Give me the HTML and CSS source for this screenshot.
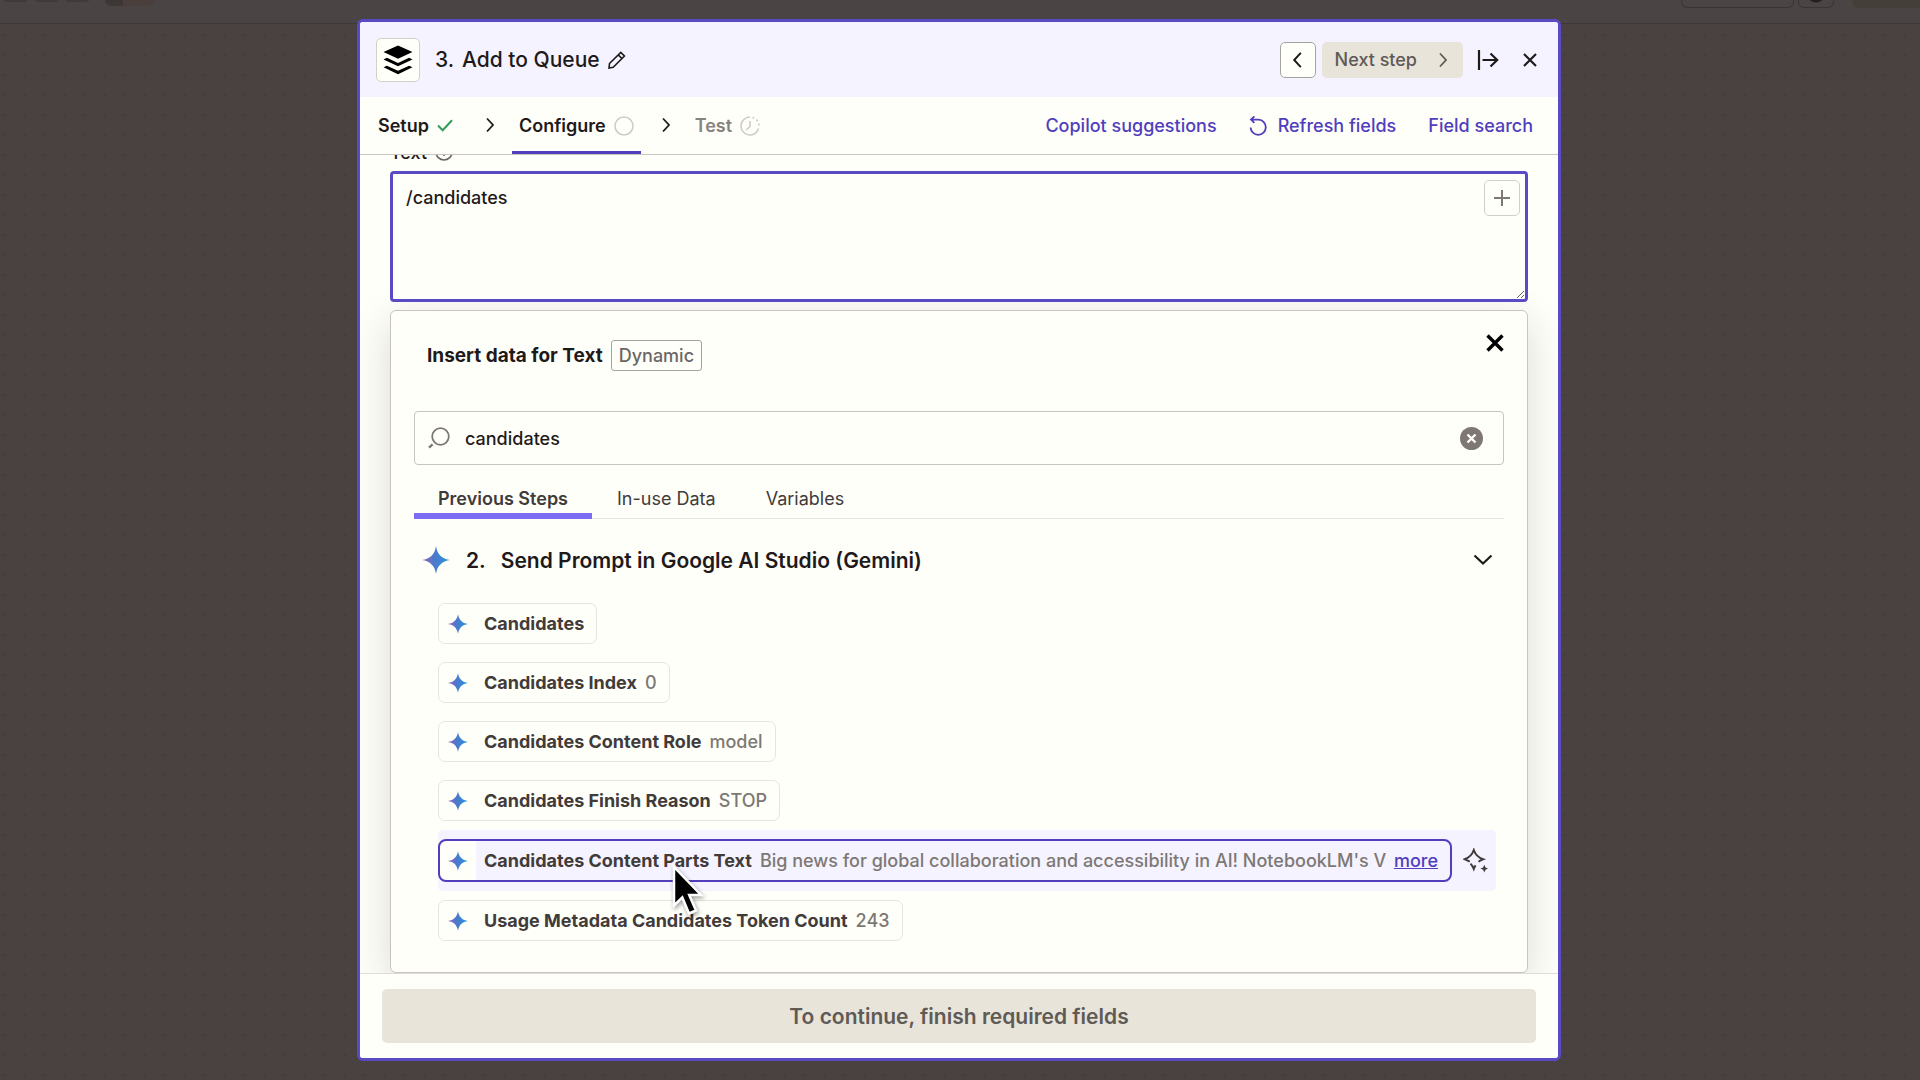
FILE: index.html
```html
<!DOCTYPE html>
<html lang="en">
<head>
  <meta charset="UTF-8">
  <title>Add to Queue</title>
  <link rel="stylesheet" href="styles.css">
</head>
<body>

<!-- shared icons -->
<svg class="sprite" aria-hidden="true">
  <defs>
    <linearGradient id="gemini" x1="0" y1="0" x2="1" y2="0">
      <stop offset="0" stop-color="#9a62b8"/>
      <stop offset="0.4" stop-color="#4f78cc"/>
      <stop offset="1" stop-color="#2196dc"/>
    </linearGradient>
  </defs>
  <symbol id="star" viewBox="0 0 28 28">
    <path fill="url(#gemini)" d="M14 0c1 8 6 13 14 14-8 1-13 6-14 14-1-8-6-13-14-14 8-1 13-6 14-14z"/>
  </symbol>
  <symbol id="chevron" viewBox="0 0 10 16">
    <path d="M2 1.5l6 6.5-6 6.5" fill="none" stroke="currentColor" stroke-width="1.8"/>
  </symbol>
</svg>

<div class="editor">
  <div class="topbar">
    <div class="topbar-left">
      <span class="ghost"></span>
      <span class="ghost"></span>
      <span class="ghost"></span>
      <span class="ghost-toggle"></span>
    </div>
    <div class="topbar-right">
      <span class="ghost-box"></span>
      <span class="ghost-avatar"></span>
      <span class="ghost-publish"></span>
    </div>
  </div>
  <div class="canvas"></div>
</div>

<div class="overlay">
  <section class="dialog" role="dialog" aria-labelledby="step-title">

    <header class="dialog-header">
      <span class="app-icon">
        <svg width="30" height="30" viewBox="0 0 30 30">
          <path d="M15 0.5l14.5 6.6L15 13.8 0.5 7.1z"/>
          <path d="M0.5 14.4l3.4-1.6L15 17.9l11.1-5.1 3.4 1.6L15 21.2z"/>
          <path d="M0.5 22.3l3.4-1.6L15 25.8l11.1-5.1 3.4 1.6L15 29.2z"/>
        </svg>
      </span>
      <h1 id="step-title"><span>3.</span> <span>Add to Queue</span></h1>
      <button class="icon-btn" aria-label="Rename step">
        <svg width="18" height="18" viewBox="0 0 18 18" fill="none" stroke="currentColor" stroke-width="1.6">
          <path d="M1.5 12.5L12.8 1.4l3.6 3.6L5.2 16.2l-4.2.8zM10.3 3.9l3.6 3.6"/>
        </svg>
      </button>
      <div class="header-actions">
        <button class="prev-btn" aria-label="Previous step">
          <svg class="flip" width="11" height="18"><use href="#chevron"/></svg>
        </button>
        <button class="next-btn" disabled>Next step
          <svg width="10" height="16"><use href="#chevron"/></svg>
        </button>
        <button class="icon-btn expand-btn" aria-label="Expand">
          <svg width="22" height="22" viewBox="0 0 22 22" fill="none" stroke="currentColor" stroke-width="2.2">
            <path d="M2 1v20M5.5 11H20M13.5 4.5L20.2 11l-6.7 6.5"/>
          </svg>
        </button>
        <button class="icon-btn" aria-label="Close">
          <svg width="14" height="14" viewBox="0 0 14 14" fill="none" stroke="currentColor" stroke-width="2.2">
            <path d="M1 1l12 12M13 1L1 13"/>
          </svg>
        </button>
      </div>
    </header>

    <nav class="steps">
      <a class="step done" href="#">Setup
        <svg class="ok" width="16" height="13" viewBox="0 0 16 13" fill="none" stroke="currentColor" stroke-width="2">
          <path d="M1 6.5l4.7 4.8L15 1.3"/>
        </svg>
      </a>
      <svg class="sep" width="10" height="16"><use href="#chevron"/></svg>
      <a class="step active" href="#">Configure
        <svg class="muted" width="20" height="20" viewBox="0 0 20 20" fill="none" stroke="currentColor" stroke-width="1.6">
          <circle cx="10" cy="10" r="9"/>
        </svg>
      </a>
      <svg class="sep" width="10" height="16"><use href="#chevron"/></svg>
      <a class="step disabled" href="#">Test
        <svg class="muted" width="20" height="20" viewBox="0 0 20 20" fill="none" stroke="currentColor" stroke-width="1.6">
          <path d="M10 1a9 9 0 1 0 8.6 11.6M10 5v5.5L6 14"/>
          <path d="M12.5 1.4a9 9 0 0 1 6.5 8.6" stroke-dasharray="2 2.4"/>
        </svg>
      </a>
      <div class="step-links">
        <button class="link-btn">Copilot suggestions</button>
        <button class="link-btn">
          <svg width="19" height="20" viewBox="0 0 19 20" fill="none" stroke="currentColor" stroke-width="1.8">
            <path d="M2 3.6h7.6A7.6 7.6 0 1 1 1.6 11.5M5.4 0.4L2 3.6l3.4 3.2"/>
          </svg>
          Refresh fields
        </button>
        <button class="link-btn">Field search</button>
      </div>
    </nav>

    <div class="dialog-body">
      <div class="field-label">
        <label for="text-field">Text</label>
        <svg width="18" height="18" viewBox="0 0 18 18" fill="none" stroke="currentColor" stroke-width="1.6">
          <circle cx="9" cy="9" r="8"/>
          <path d="M9 4v6M9 11.5V13"/>
        </svg>
      </div>
      <div class="text-wrap">
        <textarea id="text-field" spellcheck="false">/candidates</textarea>
        <button class="plus-btn" aria-label="Insert data">
          <svg width="16" height="16" viewBox="0 0 16 16" fill="none" stroke="currentColor" stroke-width="2">
            <path d="M8 0v16M0 8h16"/>
          </svg>
        </button>
      </div>

      <div class="picker">
        <div class="picker-head">
          <h2>Insert data for Text</h2>
          <span class="badge">Dynamic</span>
          <button class="icon-btn picker-close" aria-label="Close">
            <svg width="18" height="18" viewBox="0 0 18 18" fill="none" stroke="currentColor" stroke-width="3.4">
              <path d="M1.5 1.5l15 15M16.5 1.5l-15 15"/>
            </svg>
          </button>
        </div>

        <div class="search">
          <svg width="22" height="22" viewBox="0 0 22 22" fill="none" stroke="currentColor" stroke-width="1.8">
            <circle cx="12.5" cy="9.5" r="8.3"/>
            <path d="M4.6 17.4L1 20.6" stroke-width="2.4"/>
          </svg>
          <input type="text" value="candidates" aria-label="Search data" spellcheck="false">
          <button class="icon-btn clear-btn" aria-label="Clear search">
            <svg width="23" height="23" viewBox="0 0 23 23">
              <circle cx="11.5" cy="11.5" r="11.5" fill="currentColor"/>
              <path d="M7.5 7.5l8 8M15.5 7.5l-8 8" stroke="#fffffa" stroke-width="2.4"/>
            </svg>
          </button>
        </div>

        <div class="tabs" role="tablist">
          <button class="tab active" role="tab" aria-selected="true">Previous Steps</button>
          <button class="tab" role="tab">In-use Data</button>
          <button class="tab" role="tab">Variables</button>
        </div>

        <button class="group-head">
          <svg width="28" height="28"><use href="#star"/></svg>
          <span class="group-number">2.</span>
          <span class="group-name">Send Prompt in Google AI Studio (Gemini)</span>
          <svg class="caret" width="20" height="12" viewBox="0 0 20 12" fill="none" stroke="currentColor" stroke-width="2.2">
            <path d="M1.5 1.5l8.5 8 8.5-8"/>
          </svg>
        </button>

        <ul class="values">
          <li><button class="chip"><svg width="20" height="20"><use href="#star"/></svg><b>Candidates</b></button></li>
          <li><button class="chip"><svg width="20" height="20"><use href="#star"/></svg><b>Candidates Index</b> <span>0</span></button></li>
          <li><button class="chip"><svg width="20" height="20"><use href="#star"/></svg><b>Candidates Content Role</b> <span>model</span></button></li>
          <li><button class="chip"><svg width="20" height="20"><use href="#star"/></svg><b>Candidates Finish Reason</b> <span>STOP</span></button></li>
          <li class="selected">
            <button class="chip"><svg width="20" height="20"><use href="#star"/></svg><b>Candidates Content Parts Text</b> <span class="preview">Big news for global collaboration and accessibility in AI! NotebookLM's V</span> <u>more</u></button>
            <button class="icon-btn ai-btn" aria-label="Transform with AI">
              <svg width="25" height="25" viewBox="0 0 25 25" fill="none" stroke="currentColor" stroke-width="2">
                <path d="M6.8 13.6L1.6 11.2C6 9.8 9.2 6.6 10.8 2c1.6 4.6 4.8 7.8 9.2 9.2-1.7.6-3.2 1.5-4.5 2.6M7.5 15.6c1.4 1.4 2.5 3 3.3 5.2.5-1.3 1.1-2.4 1.8-3.4"/>
                <path d="M21.3 16.8l1.2 2.7 2.5 1.1-2.5 1.2-1.2 2.7-1.2-2.7-2.6-1.2 2.6-1.1z" fill="currentColor" stroke="none"/>
              </svg>
            </button>
          </li>
          <li><button class="chip"><svg width="20" height="20"><use href="#star"/></svg><b>Usage Metadata Candidates Token Count</b> <span>243</span></button></li>
        </ul>
      </div>
    </div>

    <footer class="dialog-footer">
      <button class="continue-btn" disabled>To continue, finish required fields</button>
    </footer>
  </section>
</div>

<!-- mouse pointer -->
<svg class="pointer" width="36" height="54" viewBox="0 0 36 54">
  <path d="M3 3v38.5l8.3-8L18 49.5l7-3-6.8-15.5H30z" fill="#000" stroke="#fff" stroke-width="2.5"/>
</svg>

</body>
</html>
```

FILE: styles.css
```css
* {
  box-sizing: border-box;
}

body {
  margin: 0;
  font-family: Inter, "Liberation Sans", sans-serif;
  font-size: 18px;
  color: #1f1a1a;
}

h1, h2, ul {
  margin: 0;
  padding: 0;
}

button {
  font: inherit;
  color: inherit;
  background: none;
  border: none;
  padding: 0;
  cursor: pointer;
}

svg {
  display: block;
  flex: none;
}

.sprite {
  position: absolute;
  width: 0;
  height: 0;
}

/* dimmed editor behind the dialog */
.editor {
  display: flex;
  flex-direction: column;
  height: 100vh;
}

.topbar {
  display: flex;
  justify-content: space-between;
  align-items: flex-start;
  height: 24px;
  background: #4a4544;
  border-bottom: 1px solid #3e3938;
}

.topbar-left,
.topbar-right {
  display: flex;
  gap: 8px;
}

.topbar-left {
  padding-left: 4px;
}

.topbar-right {
  gap: 4px;
}

.ghost {
  width: 23px;
  height: 2px;
  background: #403b3a;
  border-radius: 0 0 4px 4px;
}

.ghost-toggle {
  width: 50px;
  height: 6px;
  margin-left: 8px;
  background: linear-gradient(90deg, #3d3836 18px, #4b3f3d 18px);
  border-radius: 0 0 10px 10px;
}

.ghost-box,
.ghost-avatar {
  width: 113px;
  height: 8px;
  border: 1px solid #3a3535;
  border-top: none;
  border-radius: 0 0 6px 6px;
}

.ghost-avatar {
  width: 36px;
  background: radial-gradient(circle at 50% -6px, #231f1e 8px, transparent 9px);
}

.ghost-publish {
  width: 68px;
  height: 8px;
  margin-left: 14px;
  background: #453f3a;
  border-radius: 0 0 0 6px;
}

.canvas {
  flex: 1;
  background-color: #4a4240;
  background-image: radial-gradient(circle, #433e3d 1px, transparent 2px);
  background-size: 20px 20px;
  background-position: -5px 1px;
}

/* dialog */
.overlay {
  position: fixed;
  inset: 0;
  display: flex;
  justify-content: center;
  padding: 19px 17px 19px 15px;
}

.dialog {
  display: flex;
  flex-direction: column;
  width: 100%;
  max-width: 1204px;
  background: #fffffa;
  border: 3px solid #5a4bc4;
  border-radius: 6px;
  overflow: hidden;
}

.dialog-header {
  display: flex;
  align-items: center;
  height: 75px;
  padding: 0 21px 0 16px;
  background: #f5f3ff;
  flex: none;
}

.app-icon {
  display: grid;
  place-items: center;
  width: 44px;
  height: 44px;
  background: #fffffa;
  border: 1px solid #d4d0c8;
  border-radius: 5px;
}

.dialog-header h1 {
  display: flex;
  gap: 8px;
  margin: 0 8px 0 15px;
  font-size: 21px;
  font-weight: 500;
}

.header-actions {
  display: flex;
  align-items: center;
  gap: 6px;
  margin-left: auto;
}

.prev-btn,
.next-btn {
  display: flex;
  align-items: center;
  justify-content: center;
  height: 36px;
  border-radius: 5px;
}

.prev-btn {
  width: 36px;
  background: #fffffa;
  border: 1px solid #a8a39c;
}

.flip {
  transform: rotate(180deg);
}

.next-btn {
  gap: 21px;
  padding: 0 15px 0 13px;
  background: #e8e4da;
  color: #5f5a56;
  font-weight: 500;
}

.expand-btn {
  margin: 0 18px 0 8px;
}

.steps {
  display: flex;
  align-items: center;
  height: 58px;
  padding: 0 25px 0 18px;
  border-bottom: 1px solid #c9c5bd;
  flex: none;
}

.step {
  display: flex;
  align-items: center;
  gap: 8px;
  height: 57px;
  color: #1f1a1a;
  font-weight: 600;
  text-decoration: none;
}

.step.done {
  margin-right: 12px;
}

.step.active {
  padding: 3px 7px 0;
  border-bottom: 3px solid #503ebd;
}

.step.disabled {
  margin-left: 7px;
  color: #88827e;
}

.sep {
  margin: 0 17px 2px 20px;
}

.ok {
  color: #2f9e58;
}

.muted {
  color: #cfcbc6;
}

.step-links {
  display: flex;
  gap: 32px;
  margin-left: auto;
}

.link-btn {
  display: flex;
  align-items: center;
  gap: 10px;
  color: #503ebd;
  font-weight: 500;
}

.dialog-body {
  display: flex;
  flex-direction: column;
  flex: 1;
  min-height: 0;
  padding: 0 30px;
  overflow: hidden;
}

/* scrolled partly under the step bar */
.field-label {
  display: flex;
  align-items: center;
  gap: 8px;
  height: 22px;
  margin-top: -14px;
  margin-bottom: 8px;
  font-weight: 500;
  flex: none;
}

.field-label svg {
  color: #6b6663;
}

.text-wrap {
  position: relative;
  flex: none;
}

.text-wrap textarea {
  display: block;
  width: 100%;
  height: 131px;
  padding: 12px 60px 12px 13px;
  font: inherit;
  font-weight: 500;
  line-height: 24px;
  color: inherit;
  background: #fffffa;
  border: 3px solid #5a4bc4;
  border-radius: 4px;
  outline: none;
}

.plus-btn {
  position: absolute;
  top: 9px;
  right: 8px;
  display: grid;
  place-items: center;
  width: 36px;
  height: 36px;
  color: #7d7874;
  background: #fffffa;
  border: 1px solid #d4d0c8;
  border-radius: 5px;
}

/* data picker */
.picker {
  flex: 1;
  min-height: 0;
  margin-top: 8px;
  padding: 0 23px;
  background: #fffffa;
  border: 1px solid #c9c5bd;
  border-radius: 6px;
  box-shadow: 0 12px 40px rgba(31, 26, 26, 0.16);
}

.picker-head {
  display: flex;
  align-items: flex-start;
  gap: 8px;
  height: 100px;
  padding: 29px 0 0 13px;
}

.picker-head h2 {
  font-size: 19px;
  font-weight: 700;
  line-height: 31px;
}

.badge {
  height: 31px;
  padding: 0 7px;
  color: #6b6663;
  font-weight: 500;
  line-height: 29px;
  border: 1px solid #a8a39c;
  border-radius: 3px;
}

.picker-close {
  margin: -6px 0 0 auto;
  color: #000;
}

.search {
  display: flex;
  align-items: center;
  height: 54px;
  padding: 0 20px 0 13px;
  color: #7d7874;
  border: 1px solid #c9c5bd;
  border-radius: 4px;
}

.search input {
  flex: 1;
  min-width: 0;
  margin-left: 15px;
  padding: 0;
  font: inherit;
  font-weight: 500;
  color: #1f1a1a;
  background: none;
  border: none;
  outline: none;
}

.tabs {
  display: flex;
  height: 54px;
  border-bottom: 1px solid #e8e4de;
}

.tab {
  height: 54px;
  padding: 18px 25px 0;
  color: #413b3a;
  border-bottom: 6px solid transparent;
}

.tab.active {
  padding: 18px 24px 0;
  font-weight: 600;
  border-color: #7b6cf2;
}

.group-head {
  display: flex;
  align-items: center;
  width: 100%;
  height: 68px;
  margin-top: 7px;
  padding: 0 11px 0 8px;
  font-size: 21px;
  font-weight: 600;
}

.group-number {
  margin: 0 15px 0 16px;
}

.caret {
  margin-left: auto;
}

.values {
  padding: 0 8px 0 24px;
  list-style: none;
}

.values li {
  display: flex;
  align-items: center;
  height: 59px;
}

.chip {
  display: flex;
  align-items: center;
  gap: 8px;
  height: 41px;
  min-width: 0;
  padding: 0 12px 0 9px;
  color: #413b3a;
  white-space: nowrap;
  border: 1px solid #e8e4de;
  border-radius: 7px;
}

.chip svg {
  margin-right: 8px;
}

.chip b {
  font-weight: 700;
}

.chip span {
  color: #7d7874;
  font-weight: 500;
}

.values .selected {
  height: 61px;
  background: #f5f3ff;
  border-radius: 5px;
}

.selected .chip {
  flex: 1;
  height: 43px;
  padding-left: 8px;
  background: linear-gradient(90deg, #fffffa 36px, #f5f3ff 36px);
  border: 2px solid #503ebd;
  border-radius: 8px;
}

.chip .preview {
  overflow: hidden;
}

.chip u {
  margin-left: auto;
  color: #503ebd;
  font-weight: 500;
}

.ai-btn {
  margin: 0 8px 0 11px;
  color: #413b3a;
}

.dialog-footer {
  position: relative;
  padding: 15px 22px;
  background: #fffffa;
  border-top: 1px solid #e0dcd6;
  flex: none;
}

.continue-btn {
  width: 100%;
  height: 54px;
  color: #5f5a56;
  font-size: 21px;
  font-weight: 600;
  background: #e8e4da;
  border-radius: 5px;
}

.pointer {
  position: absolute;
  left: 671px;
  top: 864px;
  filter: drop-shadow(1px 2px 2px rgba(0, 0, 0, 0.4));
}
```
